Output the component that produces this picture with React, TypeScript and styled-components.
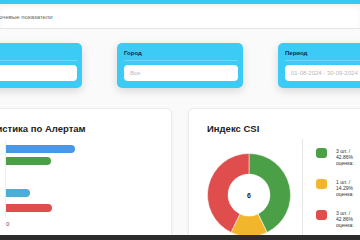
import React from 'react';
import styled, { createGlobalStyle } from 'styled-components';

const GlobalStyle = createGlobalStyle`
  html, body {
    margin: 0;
    padding: 0;
    background: #fafafa;
    font-family: 'Liberation Sans', Arial, sans-serif;
    overflow: hidden;
  }
  * {
    box-sizing: border-box;
  }
`;

const TopStrip = styled.div`
  height: 4px;
  background: #37c9f4;
`;

const Header = styled.div`
  height: 25px;
  background: #ffffff;
  border-bottom: 1px solid #e4e4e4;
  box-shadow: inset 0 3px 4px rgba(0, 0, 0, 0.05);
  display: flex;
  align-items: center;
`;

const Shell = styled.div`
  margin-left: -44px;
  width: 448px;
`;

const Crumb = styled.div`
  padding-left: 35px;
  padding-top: 1px;
  font-size: 6px;
  color: #666666;
`;

const FilterRow = styled.div`
  display: grid;
  grid-template-columns: repeat(3, 126px);
  gap: 35px;
  margin-top: 14px;
`;

const FilterCard = styled.div`
  height: 45px;
  background: #3ccbf5;
  border-radius: 5px;
  padding: 6px 5px 0 7px;
  box-shadow: 0 3px 8px rgba(0, 0, 0, 0.14);
`;

const FilterLabel = styled.div`
  font-size: 6px;
  line-height: 8px;
  font-weight: 700;
  color: #0b2b47;
  padding-bottom: 3px;
  border-bottom: 1px solid rgba(255, 255, 255, 0.25);
  margin-bottom: 4px;
`;

const FilterInput = styled.div`
  height: 16px;
  background: #ffffff;
  border-radius: 4px;
  padding-left: 6px;
  display: flex;
  align-items: center;
  font-size: 6px;
  color: #b8b8b8;
  white-space: nowrap;
`;

const ChartRow = styled.div`
  display: grid;
  grid-template-columns: repeat(2, 216px);
  gap: 16px;
  margin-top: 20px;
`;

const ChartCard = styled.div`
  height: 150px;
  background: #ffffff;
  border: 1px solid #ececec;
  border-radius: 6px;
  padding: 14px 18px 0 18px;
  box-shadow: 0 1px 4px rgba(0, 0, 0, 0.04);
`;

const ChartTitle = styled.div`
  font-size: 9.5px;
  line-height: 12px;
  font-weight: 700;
  color: #222222;
  white-space: nowrap;
`;

const BarArea = styled.div`
  margin-top: 6px;
  margin-left: 30px;
  height: 76px;
  border-left: 1px solid #eeeeee;
  padding-top: 4px;
`;

const Bar = styled.div<{ $color: string; $gap: number }>`
  height: 8px;
  margin-top: ${(p) => p.$gap}px;
  background: ${(p) => p.$color};
  border-radius: 0 4px 4px 0;
`;

const Tick = styled.div`
  margin-left: 31px;
  margin-top: 4px;
  font-size: 6px;
  color: #555555;
`;

const CsiBody = styled.div`
  display: flex;
  margin-top: 4px;
`;

const DonutWrap = styled.div`
  margin-top: 14px;
  width: 84px;
  height: 84px;
  flex-shrink: 0;
`;

const Legend = styled.div`
  margin-left: 11px;
  border-left: 1px solid #e6e6e6;
  padding: 9px 0 0 13px;
  display: flex;
  flex-direction: column;
  gap: 13px;
  height: 110px;
`;

const LegendItem = styled.div`
  display: flex;
  gap: 9px;
`;

const Swatch = styled.div<{ $color: string }>`
  width: 11px;
  height: 10px;
  border-radius: 3px;
  background: ${(p) => p.$color};
  flex-shrink: 0;
`;

const LegendText = styled.div`
  font-size: 5px;
  line-height: 6px;
  color: #333333;
  white-space: nowrap;
`;

const BottomBar = styled.div`
  position: fixed;
  left: 0;
  right: 0;
  bottom: 0;
  height: 5px;
  background: #2c2c2c;
`;

const GREEN = '#4a9f47';
const YELLOW = '#f2b62c';
const RED = '#df4d4d';

const bars = [
  { color: '#4a97e6', width: 69, gap: 0 },
  { color: GREEN, width: 45, gap: 4 },
  { color: '#4aaed6', width: 24, gap: 24 },
  { color: RED, width: 46, gap: 7 },
];

const slices = [
  { color: GREEN, count: 3, pct: '42.86' },
  { color: YELLOW, count: 1, pct: '14.29' },
  { color: RED, count: 3, pct: '42.86' },
];

function arc(cx: number, cy: number, r0: number, r1: number, a0: number, a1: number) {
  const p = (r: number, a: number) => {
    const rad = ((a - 90) * Math.PI) / 180;
    return [cx + r * Math.cos(rad), cy + r * Math.sin(rad)];
  };
  const large = a1 - a0 > 180 ? 1 : 0;
  const [x1, y1] = p(r1, a0);
  const [x2, y2] = p(r1, a1);
  const [x3, y3] = p(r0, a1);
  const [x4, y4] = p(r0, a0);
  return `M${x1} ${y1} A${r1} ${r1} 0 ${large} 1 ${x2} ${y2} L${x3} ${y3} A${r0} ${r0} 0 ${large} 0 ${x4} ${y4} Z`;
}

function Donut() {
  const total = slices.reduce((s, x) => s + x.count, 0);
  let start = 0;
  return (
    <svg width="84" height="84" viewBox="0 0 84 84">
      {slices.map((s) => {
        const end = start + (s.count / total) * 360;
        const d = arc(42, 42, 21, 41.5, start, end);
        start = end;
        return <path key={s.color} d={d} fill={s.color} stroke="#ffffff" strokeWidth="0.5" />;
      })}
      <text x="42" y="44.5" textAnchor="middle" fontSize="7" fontWeight="700" fill="#222" fontFamily="Liberation Sans, Arial, sans-serif">
        6
      </text>
    </svg>
  );
}

export default function App() {
  return (
    <>
      <GlobalStyle />
      <TopStrip />
      <Header>
        <Shell>
          <Crumb>Ключевые показатели</Crumb>
        </Shell>
      </Header>
      <Shell>
        <FilterRow>
          <FilterCard>
            <FilterLabel>Филиал</FilterLabel>
            <FilterInput>Все</FilterInput>
          </FilterCard>
          <FilterCard>
            <FilterLabel>Город</FilterLabel>
            <FilterInput>Все</FilterInput>
          </FilterCard>
          <FilterCard>
            <FilterLabel>Период</FilterLabel>
            <FilterInput>01-08-2024 - 30-09-2024</FilterInput>
          </FilterCard>
        </FilterRow>
        <ChartRow>
          <ChartCard>
            <ChartTitle>Статистика по Алертам</ChartTitle>
            <BarArea>
              {bars.map((b, i) => (
                <Bar key={i} $color={b.color} $gap={b.gap} style={{ width: b.width }} />
              ))}
            </BarArea>
            <Tick>0</Tick>
          </ChartCard>
          <ChartCard>
            <ChartTitle>Индекс CSI</ChartTitle>
            <CsiBody>
              <DonutWrap>
                <Donut />
              </DonutWrap>
              <Legend>
                {slices.map((s) => (
                  <LegendItem key={s.color}>
                    <Swatch $color={s.color} />
                    <LegendText>
                      {s.count} шт. /
                      <br />
                      {s.pct}%
                      <br />
                      оценка:
                    </LegendText>
                  </LegendItem>
                ))}
              </Legend>
            </CsiBody>
          </ChartCard>
        </ChartRow>
      </Shell>
      <BottomBar />
    </>
  );
}
